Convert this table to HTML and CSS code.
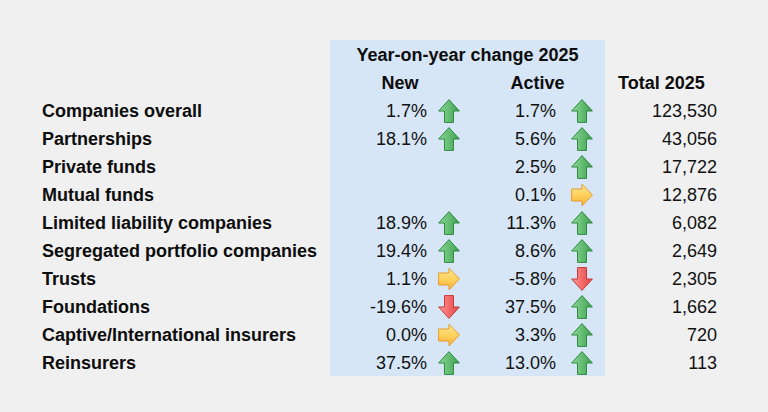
FILE: index.html
```html
<!DOCTYPE html>
<html lang="en">
<head>
<meta charset="utf-8">
<title>Year-on-year change 2025</title>
<link rel="stylesheet" href="styles.css">
</head>
<body>
<svg class="defs" aria-hidden="true">
  <defs>
    <linearGradient id="gGreen" x1="0" y1="0" x2="1" y2="0">
      <stop offset="0" stop-color="#8fd99c"/>
      <stop offset="0.5" stop-color="#63bd72"/>
      <stop offset="1" stop-color="#3f9f52"/>
    </linearGradient>
    <linearGradient id="gRed" x1="0" y1="0" x2="1" y2="0">
      <stop offset="0" stop-color="#ff9c9c"/>
      <stop offset="0.5" stop-color="#f46a6a"/>
      <stop offset="1" stop-color="#e04848"/>
    </linearGradient>
    <linearGradient id="gYellow" x1="0" y1="0" x2="0" y2="1">
      <stop offset="0" stop-color="#ffeb95"/>
      <stop offset="0.5" stop-color="#ffd15c"/>
      <stop offset="1" stop-color="#f6b236"/>
    </linearGradient>
    <symbol id="up" viewBox="0 0 22 24">
      <path d="M11 0.6 L21.4 12 L15.5 12 L15.5 23.4 L6.5 23.4 L6.5 12 L0.6 12 Z" fill="url(#gGreen)" stroke="#2f8a3f" stroke-width="1" stroke-linejoin="miter"/>
    </symbol>
    <symbol id="down" viewBox="0 0 22 24">
      <path d="M11 23.4 L21.4 12 L15.5 12 L15.5 0.6 L6.5 0.6 L6.5 12 L0.6 12 Z" fill="url(#gRed)" stroke="#c63a3a" stroke-width="1" stroke-linejoin="miter"/>
    </symbol>
    <symbol id="right" viewBox="0 0 22 24">
      <path d="M21.4 12 L11 1.2 L11 6 L0.6 6 L0.6 18 L11 18 L11 22.8 Z" fill="url(#gYellow)" stroke="#e59a2a" stroke-width="1" stroke-linejoin="miter"/>
    </symbol>
  </defs>
</svg>

<main class="sheet">
  <div class="labels">
    <div class="row"></div>
    <div class="row"></div>
    <div class="row label">Companies overall</div>
    <div class="row label">Partnerships</div>
    <div class="row label">Private funds</div>
    <div class="row label">Mutual funds</div>
    <div class="row label">Limited liability companies</div>
    <div class="row label">Segregated portfolio companies</div>
    <div class="row label">Trusts</div>
    <div class="row label">Foundations</div>
    <div class="row label">Captive/International insurers</div>
    <div class="row label">Reinsurers</div>
  </div>

  <div class="panel">
    <div class="row title">Year-on-year change 2025</div>
    <div class="row heads">
      <span class="head-new">New</span>
      <span class="head-active">Active</span>
    </div>

    <div class="row data">
      <span class="v1">1.7%</span><span class="a1"><svg class="arrow"><use href="#up"/></svg></span>
      <span class="v2">1.7%</span><span class="a2"><svg class="arrow"><use href="#up"/></svg></span>
    </div>
    <div class="row data">
      <span class="v1">18.1%</span><span class="a1"><svg class="arrow"><use href="#up"/></svg></span>
      <span class="v2">5.6%</span><span class="a2"><svg class="arrow"><use href="#up"/></svg></span>
    </div>
    <div class="row data">
      <span class="v1"></span><span class="a1"></span>
      <span class="v2">2.5%</span><span class="a2"><svg class="arrow"><use href="#up"/></svg></span>
    </div>
    <div class="row data">
      <span class="v1"></span><span class="a1"></span>
      <span class="v2">0.1%</span><span class="a2"><svg class="arrow"><use href="#right"/></svg></span>
    </div>
    <div class="row data">
      <span class="v1">18.9%</span><span class="a1"><svg class="arrow"><use href="#up"/></svg></span>
      <span class="v2">11.3%</span><span class="a2"><svg class="arrow"><use href="#up"/></svg></span>
    </div>
    <div class="row data">
      <span class="v1">19.4%</span><span class="a1"><svg class="arrow"><use href="#up"/></svg></span>
      <span class="v2">8.6%</span><span class="a2"><svg class="arrow"><use href="#up"/></svg></span>
    </div>
    <div class="row data">
      <span class="v1">1.1%</span><span class="a1"><svg class="arrow"><use href="#right"/></svg></span>
      <span class="v2">-5.8%</span><span class="a2"><svg class="arrow"><use href="#down"/></svg></span>
    </div>
    <div class="row data">
      <span class="v1">-19.6%</span><span class="a1"><svg class="arrow"><use href="#down"/></svg></span>
      <span class="v2">37.5%</span><span class="a2"><svg class="arrow"><use href="#up"/></svg></span>
    </div>
    <div class="row data">
      <span class="v1">0.0%</span><span class="a1"><svg class="arrow"><use href="#right"/></svg></span>
      <span class="v2">3.3%</span><span class="a2"><svg class="arrow"><use href="#up"/></svg></span>
    </div>
    <div class="row data">
      <span class="v1">37.5%</span><span class="a1"><svg class="arrow"><use href="#up"/></svg></span>
      <span class="v2">13.0%</span><span class="a2"><svg class="arrow"><use href="#up"/></svg></span>
    </div>
  </div>

  <div class="totals">
    <div class="row"></div>
    <div class="row total-head">Total 2025</div>
    <div class="row num">123,530</div>
    <div class="row num">43,056</div>
    <div class="row num">17,722</div>
    <div class="row num">12,876</div>
    <div class="row num">6,082</div>
    <div class="row num">2,649</div>
    <div class="row num">2,305</div>
    <div class="row num">1,662</div>
    <div class="row num">720</div>
    <div class="row num">113</div>
  </div>
</main>
</body>
</html>
```

FILE: styles.css
```css
html, body {
  margin: 0;
  padding: 0;
  background: #f0f0f0;
}

body {
  width: 768px;
  height: 412px;
  overflow: hidden;
  font-family: "Liberation Sans", Arial, sans-serif;
  font-size: 18px;
  color: #111111;
}

.defs {
  display: block;
  width: 0;
  height: 0;
  overflow: hidden;
}

.sheet {
  display: flex;
  align-items: flex-start;
  padding: 40px 0 0 42px;
}

.row {
  box-sizing: border-box;
  height: 28px;
  padding-top: 2px;
  line-height: 26px;
  white-space: nowrap;
}

.labels {
  width: 288px;
  flex: none;
}

.label {
  font-weight: 700;
  color: #0d0d0d;
}

.panel {
  width: 275px;
  flex: none;
  background: #d6e6f6;
}

.title {
  font-weight: 700;
  text-align: center;
  color: #0d0d0d;
}

.heads {
  display: grid;
  grid-template-columns: 130px 145px;
  font-weight: 700;
  color: #0d0d0d;
}

.head-new,
.head-active {
  text-align: center;
  padding-left: 10px;
}

.data {
  display: grid;
  grid-template-columns: 97px 33px 96px 37px 12px;
  align-items: center;
  padding-top: 0;
  line-height: 28px;
}

.v1,
.v2 {
  text-align: right;
  padding-top: 2px;
  line-height: 26px;
}

.a1,
.a2 {
  display: flex;
  align-items: center;
  height: 28px;
}

.a1 {
  padding-left: 11px;
}

.a2 {
  padding-left: 15px;
}

.arrow {
  display: block;
  width: 22px;
  height: 24px;
  margin-top: 2px;
}

.totals {
  width: 112px;
  flex: none;
}

.total-head {
  font-weight: 700;
  padding-left: 13px;
  color: #0d0d0d;
}

.num {
  text-align: right;
}
```
